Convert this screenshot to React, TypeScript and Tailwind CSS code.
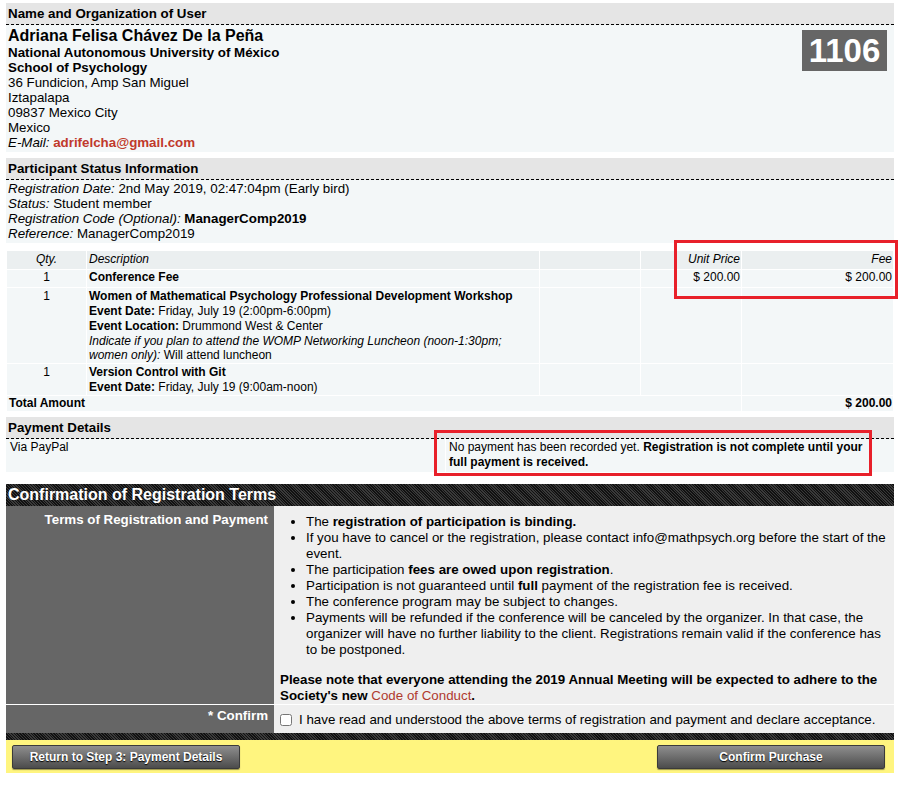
const SectionHead = ({ title }: { title: string }) => (
  <div className="bg-[#e5e5e5] border-b border-dashed border-black h-[22px] px-[2px] flex items-center text-[13.33px] font-bold text-black">
    {title}
  </div>
);

const stripes =
  "bg-[repeating-linear-gradient(45deg,#111_0px,#111_1px,#3a3a3a_1px,#3a3a3a_2px)]";

const btn =
  "h-[24px] rounded-[2px] border border-[#3a3a3a] bg-[linear-gradient(#8e8e8e,#4c4c4c)] text-white font-bold text-[12px] [text-shadow:0_1px_1px_#000] shadow-[0_1px_1px_rgba(0,0,0,0.4)]";

export default function App() {
  return (
    <div
      className="relative w-[898px] min-h-[786px] bg-white text-black"
      style={{ fontFamily: '"Liberation Sans", Arial, sans-serif' }}
    >
      <div className="ml-[6px] w-[888px] pt-[3px]">
        {/* Name and organization */}
        <SectionHead title="Name and Organization of User" />
        <div className="bg-[#f3f7f8] h-[127px] px-[2px] pt-[2px] flex justify-between">
          <div className="text-[13.33px] leading-[15px]">
            <div className="text-[16px] font-bold leading-[18px]">Adriana Felisa Chávez De la Peña</div>
            <div className="font-bold">National Autonomous University of México</div>
            <div className="font-bold">School of Psychology</div>
            <div>36 Fundicion, Amp San Miguel</div>
            <div>Iztapalapa</div>
            <div>09837 Mexico City</div>
            <div>Mexico</div>
            <div>
              <i>E-Mail:</i> <span className="text-[#c0392b] font-bold">adrifelcha@gmail.com</span>
            </div>
          </div>
          <div className="mt-[3px] mr-[5px] h-[41px] w-[85px] bg-[#666] text-white font-bold text-[33px] leading-[41px] text-center">
            1106
          </div>
        </div>

        {/* Participant status */}
        <div className="mt-[6px]">
          <SectionHead title="Participant Status Information" />
          <div className="bg-[#f3f7f8] h-[63px] px-[2px] pt-[1px] text-[13.33px] leading-[15px]">
            <div>
              <i>Registration Date:</i> 2nd May 2019, 02:47:04pm (Early bird)
            </div>
            <div>
              <i>Status:</i> Student member
            </div>
            <div>
              <i>Registration Code (Optional):</i> <b>ManagerComp2019</b>
            </div>
            <div>
              <i>Reference:</i> ManagerComp2019
            </div>
          </div>
        </div>

        {/* Fees table */}
        <table className="mt-[7px] w-full border-collapse text-[12px] leading-[15px]">
          <colgroup>
            <col className="w-[80px]" />
            <col className="w-[453px]" />
            <col className="w-[101px]" />
            <col className="w-[101px]" />
            <col />
          </colgroup>
          <tbody>
            <tr className="bg-[#ebeff0] h-[19px] italic">
              <td className="border border-white text-center align-top pt-[1px] px-[2px]">Qty.</td>
              <td className="border border-white align-top pt-[1px] px-[2px]">Description</td>
              <td className="border border-white"></td>
              <td className="border border-white text-right align-top pt-[1px] px-[1px]">Unit Price</td>
              <td className="border border-white text-right align-top pt-[1px] px-[1px]">Fee</td>
            </tr>
            <tr className="bg-[#f3f7f8] h-[18px]">
              <td className="border border-white text-center align-top px-[2px]">1</td>
              <td className="border border-white font-bold align-top px-[2px]">Conference Fee</td>
              <td className="border border-white"></td>
              <td className="border border-white text-right align-top px-[1px]">$ 200.00</td>
              <td className="border border-white text-right align-top px-[1px]">$ 200.00</td>
            </tr>
            <tr className="bg-[#f3f7f8]">
              <td className="border border-white text-center align-top px-[2px] pt-[1px]">1</td>
              <td className="border border-white align-top px-[2px] pt-[1px] pb-[1px]">
                <div className="font-bold">Women of Mathematical Psychology Professional Development Workshop</div>
                <div>
                  <b>Event Date:</b> Friday, July 19 (2:00pm-6:00pm)
                </div>
                <div>
                  <b>Event Location:</b> Drummond West &amp; Center
                </div>
                <div className="leading-[14px] pr-[8px]">
                  <i>Indicate if you plan to attend the WOMP Networking Luncheon (noon-1:30pm; women only):</i> Will attend luncheon
                </div>
              </td>
              <td className="border border-white"></td>
              <td className="border border-white"></td>
              <td className="border border-white"></td>
            </tr>
            <tr className="bg-[#f3f7f8]">
              <td className="border border-white text-center align-top px-[2px] pt-[1px]">1</td>
              <td className="border border-white align-top px-[2px] pt-[1px]">
                <div className="font-bold">Version Control with Git</div>
                <div>
                  <b>Event Date:</b> Friday, July 19 (9:00am-noon)
                </div>
              </td>
              <td className="border border-white"></td>
              <td className="border border-white"></td>
              <td className="border border-white"></td>
            </tr>
            <tr className="bg-[#f3f7f8] h-[16px] font-bold">
              <td colSpan={4} className="border border-white px-[2px]">Total Amount</td>
              <td className="border border-white text-right px-[1px]">$ 200.00</td>
            </tr>
          </tbody>
        </table>

        {/* Payment details */}
        <div className="mt-[5px]">
          <SectionHead title="Payment Details" />
          <div className="bg-[#f3f7f8] h-[33px] flex text-[12px] leading-[15px]">
            <div className="w-[439px] px-[4px] pt-[1px]">Via PayPal</div>
            <div className="flex-1 border-l border-white pl-[3px] pr-[24px] pt-[1px]">
              No payment has been recorded yet. <b>Registration is not complete until your full payment is received.</b>
            </div>
          </div>
        </div>

        {/* Confirmation of terms */}
        <div className={`mt-[12px] h-[22px] px-[2px] flex items-center text-white font-bold text-[16px] ${stripes}`}>
          Confirmation of Registration Terms
        </div>
        <div className="grid grid-cols-[268px_1fr] text-[13.33px] leading-[16px]">
          <div className="bg-[#666] text-white font-bold text-right pr-[6px] pt-[6px]">
            Terms of Registration and Payment
          </div>
          <div className="bg-[#efefef] pl-[6px] pr-[8px] pt-[8px]">
            <ul className="list-disc pl-[26px]">
              <li>
                The <b>registration of participation is binding.</b>
              </li>
              <li>
                If you have to cancel or the registration, please contact info@mathpsych.org before the start of the event.
              </li>
              <li>
                The participation <b>fees are owed upon registration</b>.
              </li>
              <li>
                Participation is not guaranteed until <b>full</b> payment of the registration fee is received.
              </li>
              <li>The conference program may be subject to changes.</li>
              <li>
                Payments will be refunded if the conference will be canceled by the organizer. In that case, the organizer will have no further liability to the client. Registrations remain valid if the conference has to be postponed.
              </li>
            </ul>
            <p className="mt-[14px] font-bold">
              Please note that everyone attending the 2019 Annual Meeting will be expected to adhere to the Society's new{" "}
              <span className="text-[#b03a2e] font-normal">Code of Conduct</span>.
            </p>
          </div>
          <div className="bg-[#666] border-t border-white text-white font-bold text-right pr-[6px] pt-[3px] h-[29px]">
            * Confirm
          </div>
          <div className="bg-[#efefef] border-t border-white pl-[6px] pt-[2px] flex items-center gap-[7px]">
            <input type="checkbox" className="w-[12px] h-[12px] m-0" />
            <span>I have read and understood the above terms of registration and payment and declare acceptance.</span>
          </div>
        </div>
        <div className={`h-[7px] ${stripes}`}></div>
        <div className="bg-[#fff57f] h-[33px] px-[6px] flex items-center justify-between">
          <button className={`${btn} w-[228px]`}>Return to Step 3: Payment Details</button>
          <button className={`${btn} w-[228px] mr-[3px]`}>Confirm Purchase</button>
        </div>
      </div>

      {/* red annotation boxes */}
      <div className="absolute left-[674px] top-[240px] w-[224px] h-[59px] border-[3px] border-[#e8202a]"></div>
      <div className="absolute left-[434px] top-[430px] w-[438px] h-[46px] border-[3px] border-[#e8202a]"></div>
    </div>
  );
}
